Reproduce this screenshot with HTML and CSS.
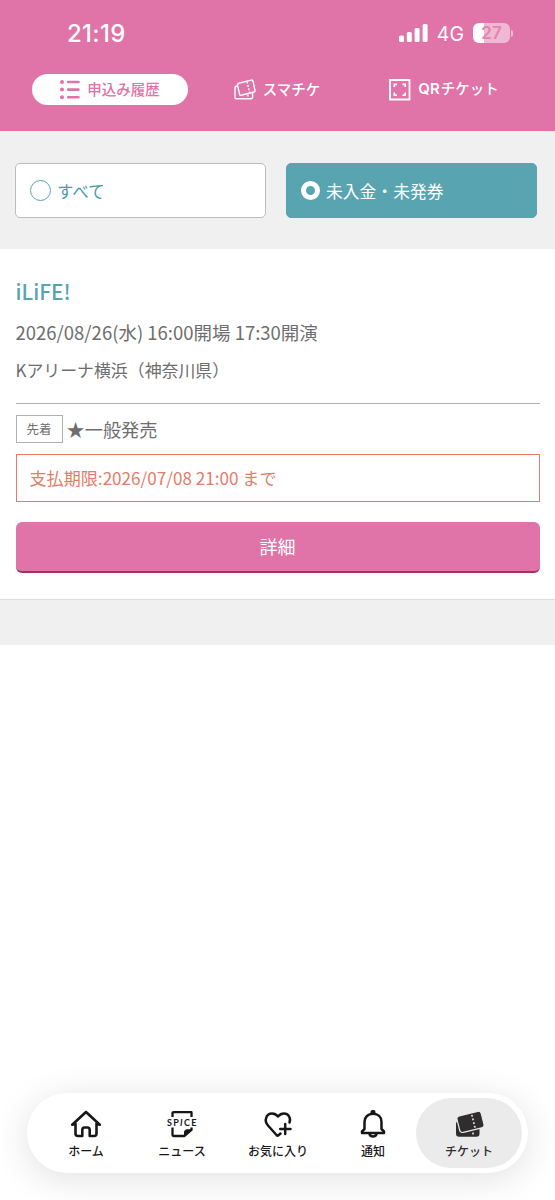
FILE: index.html
```html
<!DOCTYPE html>
<html lang="ja">
<head>
<meta charset="utf-8">
<title>申込み履歴</title>
<link rel="stylesheet" href="styles.css">
</head>
<body>
<header class="header">
  <div class="status">
    <span class="time">21:19</span>
    <div class="status-icons">
      <svg class="signal" width="29" height="18" viewBox="0 0 29 18" fill="#fff"><rect x="0" y="11.5" width="5" height="6.5" rx="1.5"/><rect x="7.8" y="8" width="5" height="10" rx="1.5"/><rect x="15.6" y="4" width="5" height="14" rx="1.5"/><rect x="23.6" y="0" width="5" height="18" rx="1.5"/></svg>
      <span class="network">4G</span>
      <div class="battery"><span class="battery-level">27</span></div>
      <span class="battery-tip"></span>
    </div>
  </div>
  <nav class="tabs">
    <a class="tab tab-active">
      <svg width="20" height="20" viewBox="0 0 20 20" fill="none" stroke="#e073a7" stroke-width="2.6" stroke-linecap="round"><path d="M8.2 2h10.3M8.2 9.6h10.3M8.2 17.3h10.3"/><path stroke-width="4" d="M2 2h.01M2 9.6h.01M2 17.3h.01"/></svg>
      <span>申込み履歴</span>
    </a>
    <a class="tab">
      <svg width="22" height="21" viewBox="0 0 22 21" fill="none" stroke="#fff" stroke-width="1.4" stroke-linejoin="round"><path d="M4.600 4.300L17.300 1.100Q18.600.8 19 2.100L21 11.300Q21.300 12.700 20 13L7.200 16.200Q5.900 16.500 5.500 15.200L3.500 6Q3.200 4.700 4.600 4.300Z"/><path d="M3.200 7Q1 7.200 1 9V18.400Q1 19.800 2.400 19.800H17Q18.400 19.800 18.600 18.400V14"/><path stroke-dasharray="2 1.500" d="M13 2.500L15.700 13.500M14 15.500V19"/></svg>
      <span>スマチケ</span>
    </a>
    <a class="tab tab-qr">
      <svg width="22" height="22" viewBox="0 0 22 22" fill="none" stroke="#fff"><path stroke-width="1.800" d="M1 1h19.500v19.500H1z"/><path stroke-width="1.700" d="M5.300 8V5.300H8M13.500 5.300h2.700V8M16.200 13.500v2.700h-2.700M8 16.200H5.300v-2.700"/></svg>
      <span><b>QR</b>チケット</span>
    </a>
  </nav>
</header>
<main>
  <section class="filters">
    <button class="filter"><i class="radio"></i><span>すべて</span></button>
    <button class="filter filter-on"><i class="radio"></i><span>未入金・未発券</span></button>
  </section>
  <article class="event">
    <h1 class="artist">iLiFE!</h1>
    <p class="date">2026/08/26(水) 16:00開場 17:30開演</p>
    <p class="venue">Kアリーナ横浜（神奈川県）</p>
    <div class="sale"><span class="tag">先着</span><span>★一般発売</span></div>
    <p class="deadline">支払期限:2026/07/08 21:00 まで</p>
    <button class="detail">詳細</button>
  </article>
  <div class="spacer"></div>
</main>
<nav class="dock">
  <a class="dock-item">
    <svg width="32" height="28" viewBox="0 0 32 28" fill="none" stroke="#171717" stroke-width="2.600" stroke-linejoin="round" stroke-linecap="round"><path d="M5.500 14L2.200 14.800 16 2 29.800 14.800 26.500 14M5.500 13.500V23.500Q5.500 26 8 26H12.300V20Q12.300 17.500 14.500 17.500H17.500Q19.700 17.500 19.700 20V26H24Q26.500 26 26.500 23.500V13.500"/></svg>
    <span>ホーム</span>
  </a>
  <a class="dock-item">
    <svg width="32" height="28" viewBox="0 0 32 28" fill="none" stroke="#171717" stroke-width="2.300" stroke-linejoin="round"><path d="M6.500 7V3.500Q6.500 2.200 8 2.200H25.500V7M6.500 17.500V24.500Q6.500 26 8 26H18.500L25.500 20V17.500"/><path fill="#171717" stroke-width="1" d="M18.500 26V22Q18.500 19.800 21 19.800H25.500Z"/><text class="spice" x="1" y="16">SP<tspan font-style="italic">I</tspan>CE</text></svg>
    <span>ニュース</span>
  </a>
  <a class="dock-item">
    <svg width="32" height="28" viewBox="0 0 32 28" fill="none" stroke="#171717" stroke-width="2.500" stroke-linecap="round" stroke-linejoin="round"><path d="M18.500 23.500L16.500 25.300Q15.500 26 14.500 25L6 15.500C1.500 10.500 4.500 3.500 10 3.500Q13.500 3.500 16 6.500Q18.500 3.500 22 3.500C26.500 3.500 29.200 8 27.500 12.500M23.200 14V24M18.200 19H28.500"/></svg>
    <span>お気に入り</span>
  </a>
  <a class="dock-item dock-bell">
    <svg width="32" height="28" viewBox="0 0 32 28" fill="none" stroke="#171717" stroke-width="2.500" stroke-linejoin="round"><path d="M7.500 19V12C7.500 7 11 3.800 16 3.800S24.500 7 24.500 12V19L27 21.500V23H5V21.500Z"/><path d="M12.500 23.800Q13 26.600 16 26.600T19.500 23.800"/><circle cx="16" cy="2.400" r="1.300" fill="#171717"/></svg>
    <span>通知</span>
  </a>
  <a class="dock-item dock-active">
    <svg width="32" height="28" viewBox="0 0 32 28"><rect x="3" y="11" width="23.500" height="15.700" rx="3" fill="#302d2e"/><g transform="rotate(-14 17 12)"><rect x="5" y="3.500" width="25" height="17" rx="3" fill="#302d2e" stroke="#ebebeb" stroke-width="1.200"/><path d="M20.500 5.500V19.500" stroke="#ebebeb" stroke-width="1.600" stroke-dasharray="1.800 2"/></g><path d="M20 22.500v2" stroke="#ebebeb" stroke-width="1.600"/></svg>
    <span>チケット</span>
  </a>
</nav>
</body>
</html>
```
FILE: styles.css
```css
* { box-sizing: border-box; }
body {
  margin: 0;
  height: 1200px;
  display: flex;
  flex-direction: column;
  overflow: hidden;
  background: #fff;
  color: #6e6e6e;
  font-family: "Noto Sans CJK JP", sans-serif;
}
h1, p { margin: 0; font-weight: 400; }
svg { flex: none; display: block; }
button { font-family: inherit; }

.header { height: 131px; background: #e073a7; color: #fff; }
.status {
  height: 66px;
  padding: 0 42px 0 67px;
  display: flex;
  align-items: center;
  justify-content: space-between;
}
.time { font: 500 24px/28px Inter, sans-serif; letter-spacing: 0.3px; padding-top: 1px; }
.status-icons { display: flex; align-items: center; }
.network { margin: 1px 9px 0; font: 400 19.500px/24px Inter, sans-serif; }
.battery {
  width: 37px;
  height: 20px;
  border-radius: 6px;
  background: linear-gradient(90deg, #fff 10.500px, #f0b9d3 10.500px);
  display: flex;
  justify-content: center;
}
.battery-level { font: 600 17px/20px Inter, sans-serif; color: #dd86b1; }
.battery-tip { width: 2px; height: 7px; margin-left: 1px; border-radius: 0 3px 3px 0; background: #f0b9d3; }

.tabs { height: 31px; margin-top: 8px; display: grid; grid-template-columns: 156px 156px 156px; column-gap: 11px; padding-left: 32px; }
.tab {
  display: flex;
  align-items: center;
  justify-content: center;
  gap: 7px;
  font-size: 14.500px;
  line-height: 20px;
  font-weight: 500;
}
.tab span { padding-bottom: 2px; }
.tab-active { background: #fff; color: #e073a7; border-radius: 16px; }
.tab b { font: 600 15px/20px Inter, sans-serif; margin-right: 1px; }

.filters {
  height: 118px;
  padding: 32px 18px 0 15px;
  display: grid;
  grid-template-columns: 251px 251px;
  grid-template-rows: 55px;
  column-gap: 20px;
  background: #f0f0f0;
}
.filter {
  border: 1px solid #bdbdbd;
  border-radius: 5px;
  background: #fff;
  padding: 0 14px;
  display: flex;
  align-items: center;
  gap: 6px;
  color: #4a9ba8;
  font-size: 16.500px;
  font-weight: 400;
}
.radio { width: 21px; height: 21px; border: 1.500px solid #58a4b0; border-radius: 50%; }
.filter-on { background: #58a4b0; border-color: #58a4b0; color: #fff; font-size: 16.800px; }
.filter-on .radio { width: 19px; height: 19px; border: 5px solid #fff; }

.event { height: 350px; padding: 27px 15.500px 0; display: flex; flex-direction: column; background: #fff; }
.artist { font-size: 20.900px; line-height: 30px; color: #58a4b0; font-weight: 500; }
.date { margin-top: 12px; font-size: 18.500px; line-height: 28px; }
.venue { margin-top: 10px; font-size: 16.900px; line-height: 28px; }
.sale {
  margin-top: 19px;
  padding-top: 11px;
  border-top: 1px solid #b0b0b0;
  display: flex;
  align-items: center;
  gap: 4px;
  font-size: 18.200px;
  line-height: 28px;
}
.tag { width: 47px; height: 28px; border: 1px solid #b0b0b0; font-size: 12.500px; line-height: 26px; text-align: center; }
.deadline {
  height: 48px;
  margin-top: 11px;
  padding-left: 13px;
  border: 1px solid #e47c68;
  color: #e47c68;
  font-size: 17.100px;
  line-height: 45px;
}
.detail {
  height: 51px;
  margin-top: 20px;
  padding: 0 0 2px;
  border: 0;
  border-bottom: 2px solid #a92e64;
  border-radius: 6px;
  background: #e073a7;
  color: #fff;
  font-size: 18px;
  font-weight: 400;
}
.spacer { height: 46px; background: #f0f0f0; border-top: 1px solid #ddd; }

.dock {
  width: 501px;
  height: 80px;
  margin: auto 0 27px 27px;
  padding: 0 6px 0 11px;
  border-radius: 40px;
  background: #fff;
  box-shadow: 0 6px 36px rgba(0, 0, 0, .12);
  display: grid;
  grid-template-columns: 96px 96px 96px 90px 106px;
  align-items: center;
}
.dock-item {
  height: 70px;
  padding-top: 12px;
  display: flex;
  flex-direction: column;
  align-items: center;
  gap: 4px;
  color: #171717;
  font-size: 12px;
  line-height: 18px;
  font-weight: 500;
}
.dock-bell { padding-left: 4px; }
.dock-active { border-radius: 35px; background: #ebebeb; color: #302d2e; }
.spice { font: 700 9px Lato, sans-serif; letter-spacing: 1.300px; fill: #171717; stroke: none; }
```
